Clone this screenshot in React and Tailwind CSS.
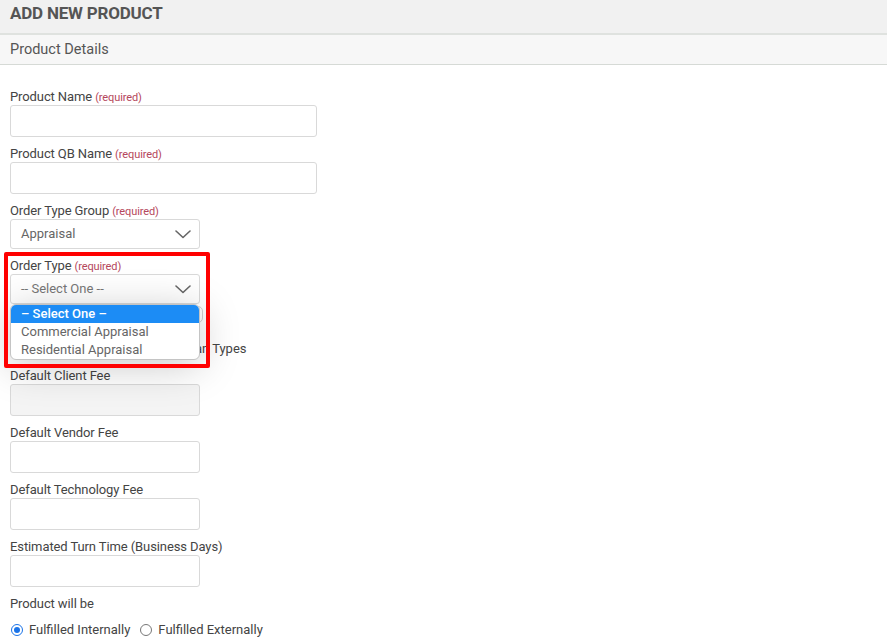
import React from 'react';

// ─── Constants ───────────────────────────────────────────────────────────────

const FONT = { fontFamily: 'Roboto, "Liberation Sans", Arial, sans-serif' };

const ORDER_TYPES = ['– Select One –', 'Commercial Appraisal', 'Residential Appraisal'];

// ─── Helpers ─────────────────────────────────────────────────────────────────

function Chevron() {
  return (
    <svg width="16" height="9" viewBox="0 0 16 9" fill="none" className="shrink-0">
      <path d="M1 1l7 6.5L15 1" stroke="#666" strokeWidth="1.6" strokeLinecap="round" strokeLinejoin="round" />
    </svg>
  );
}

function Label({ children, required }) {
  return (
    <div className="h-[16px] text-[13px] leading-[16px] text-[#444] tracking-[-0.1px]">
      {children}
      {required && <span className="ml-[3px] text-[11px] text-[#b5475c]">(required)</span>}
    </div>
  );
}

function TextInput({ wide, disabled }) {
  return (
    <div
      className={`h-[32px] rounded-[3px] border border-[#d9d9d9] ${wide ? 'w-[307px]' : 'w-[190px]'} ${disabled ? 'bg-[#f4f4f4]' : 'bg-white'}`}
    />
  );
}

function Select({ value, placeholder }) {
  return (
    <div className="flex h-[30px] w-[190px] items-center justify-between rounded-[3px] border border-[#d9d9d9] bg-white pl-[10px] pr-[8px]">
      <span className={`text-[13px] ${placeholder ? 'text-[#777]' : 'text-[#666]'}`}>{value}</span>
      <Chevron />
    </div>
  );
}

function Radio({ checked, label }) {
  return (
    <label className="flex h-[16px] items-center gap-[6px] text-[13px] text-[#444]">
      {checked ? (
        <span className="flex h-[12px] w-[12px] items-center justify-center rounded-full border-[1.5px] border-[#1a73e8]">
          <span className="h-[6px] w-[6px] rounded-full bg-[#1a73e8]" />
        </span>
      ) : (
        <span className="h-[12px] w-[12px] rounded-full border border-[#777]" />
      )}
      {label}
    </label>
  );
}

// ─── Component ───────────────────────────────────────────────────────────────

export default function App() {
  return (
    <div className="relative h-[643px] w-[887px] overflow-hidden bg-white" style={FONT}>
      {/* Page title */}
      <div className="h-[35px] border-b-2 border-[#dfe2df] bg-[#f1f1f1] px-[10px] pt-[3px]">
        <h1 className="text-[17px] font-bold uppercase leading-[20px] tracking-[-0.2px] text-[#555]">Add New Product</h1>
      </div>
      {/* Section header */}
      <div className="flex h-[30px] items-center border-b border-[#d6dad6] bg-[#f7f7f7] px-[10px]">
        <h2 className="text-[14.5px] text-[#555]">Product Details</h2>
      </div>

      <div className="px-[10px] pt-[24px]">
        <div className="mb-[9px]">
          <Label required>Product Name</Label>
          <TextInput wide />
        </div>
        <div className="mb-[9px]">
          <Label required>Product QB Name</Label>
          <TextInput wide />
        </div>
        <div className="mb-[9px]">
          <Label required>Order Type Group</Label>
          <Select value="Appraisal" />
        </div>

        {/* Order Type with its open list */}
        <div className="relative z-10">
          <Label required>Order Type</Label>
          <Select value="-- Select One --" placeholder />
          <div className="absolute left-0 top-[46px] w-[190px] overflow-hidden rounded-[6px] border border-[#c4c4c4] bg-white shadow-[0_6px_40px_rgba(0,0,0,0.22)]">
            {ORDER_TYPES.map((t, i) => (
              <div
                key={t}
                className={`h-[18px] px-[10px] text-[13px] leading-[18px] ${i === 0 ? 'bg-[#1c8cf5] font-medium text-white' : 'text-[#666]'}`}
              >
                {t}
              </div>
            ))}
          </div>
        </div>

        {/* Content hidden under the open list */}
        <div className="mt-[2px] h-[17px] w-[193px] rounded-[5px] border border-[#d0d0d0]" />
        <div className="mt-[18px] mb-[11px] flex h-[16px] items-center gap-[6px] text-[13px] text-[#444]">
          <span className="h-[12px] w-[12px] rounded-[2px] border border-[#999]" />
          Make this Available for All Loan Types
        </div>

        <div className="mb-[9px]">
          <Label>Default Client Fee</Label>
          <TextInput disabled />
        </div>
        <div className="mb-[9px]">
          <Label>Default Vendor Fee</Label>
          <TextInput />
        </div>
        <div className="mb-[9px]">
          <Label>Default Technology Fee</Label>
          <TextInput />
        </div>
        <div className="mb-[9px]">
          <Label>Estimated Turn Time (Business Days)</Label>
          <TextInput />
        </div>
        <Label>Product will be</Label>
        <div className="mt-[10px] flex items-center gap-[10px] pl-[1px]">
          <Radio checked label="Fulfilled Internally" />
          <Radio label="Fulfilled Externally" />
        </div>
      </div>

      {/* Annotation box */}
      <div className="pointer-events-none absolute left-[4px] top-[252px] z-20 h-[116px] w-[206px] rounded-[2px] border-[4px] border-[#ff0000]" />
    </div>
  );
}
